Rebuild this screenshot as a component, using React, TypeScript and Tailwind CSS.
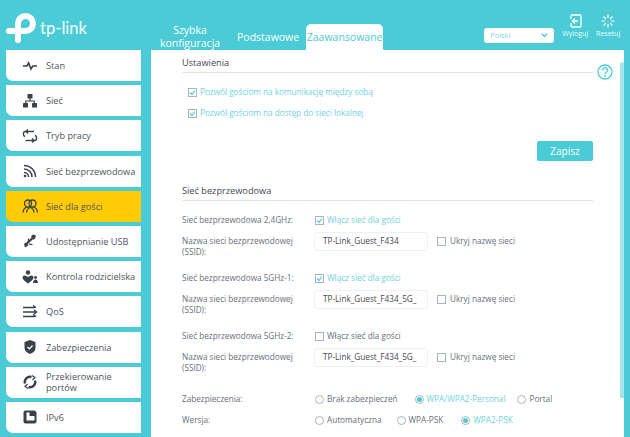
import type { ReactNode } from "react";

const dark = "#39424a";

const icons: Record<string, ReactNode> = {
  stan: <path d="M1 8h4l1.600-3 2.400 6 1.800-3H15" fill="none" stroke={dark} strokeWidth="1.600" />,
  siec: (
    <g fill={dark}>
      <rect x="5.500" y="1" width="5" height="4.500" rx=".6" />
      <rect x="1" y="10" width="5" height="4.500" rx=".6" />
      <rect x="10" y="10" width="5" height="4.500" rx=".6" />
      <path d="M7.400 5h1.200v2.400h4.200V10h-1.200V8.600H4.400V10H3.200V7.400h4.200z" />
    </g>
  ),
  tryb: (
    <g fill="none" stroke={dark} strokeWidth="1.400">
      <path d="M5 3.500H3.200Q1.500 3.500 1.500 5.200v1.600Q1.500 8 3 8.500" />
      <path d="M6 1.500 4 3.500l2 2" />
      <path d="M4 3.500h8" />
      <path d="M11 12.500h1.800q1.700 0 1.700-1.800V9.200Q14.500 8 13 7.500" />
      <path d="m10 10.500 2 2-2 2" />
      <path d="M3.500 12.500H12" />
    </g>
  ),
  wifi: (
    <g fill="none" stroke={dark} strokeWidth="1.500">
      <path d="M2 2.500c6.500 0 11.500 5 11.500 11.500" />
      <path d="M2 6c4.500 0 8 3.500 8 8" />
      <path d="M2 9.500c2.500 0 4.500 2 4.500 4.500" />
      <circle cx="3" cy="13" r="1.300" fill={dark} stroke="none" />
    </g>
  ),
  goscie: (
    <g fill="none" stroke={dark} strokeWidth="1.300">
      <circle cx="6" cy="5.500" r="3.500" />
      <circle cx="10.500" cy="5.500" r="3.500" />
      <path d="M1 14.500q.5-4.500 4-5.500M15.500 14.500q-.5-4.500-4-5.500M4.500 14.500q.5-4 3.700-5 3.300 1 3.800 5" />
    </g>
  ),
  usb: (
    <g fill={dark}>
      <path d="M3 14.500 2 11l1.500-1.500 3 3z" />
      <path d="M3 11 9.500 4.500l1.500 1.500L4.500 12.500z" />
      <path d="m9 3.500 2-2 3 1-1 3-2 1.500z" />
      <path d="M5.500 9 6 5.500l1.200.2-.5 2.300zM7.500 10.500l3 .5-.2 1.200-3.800-.7z" />
    </g>
  ),
  kontrola: (
    <g fill={dark}>
      <circle cx="6" cy="3.500" r="2.200" />
      <path d="M2.500 6.500q1.500 0 3.500 1.500 2-1.500 3.500-1.500 2 0 2 2.200 0 2-5.500 5.800-5.500-3.800-5.500-5.800 0-2.200 2-2.200z" />
      <circle cx="13.500" cy="8.500" r="1.400" />
      <path d="M11 14q.3-3.500 2.500-3.500T16 14z" />
    </g>
  ),
  qos: (
    <g fill="none" stroke={dark} strokeWidth="1.500">
      <path d="M1 3.500h12M1 8h13M1 12.500h12" />
      <path d="m11 1.500 3 2M12 6l2.500 2-2.500 2M11 10.500l3 2" />
    </g>
  ),
  tarcza: (
    <g>
      <path d="M8 1 13.500 3v5.500Q13.500 13 8 15 2.500 13 2.500 8.500V3z" fill={dark} />
      <path d="m5.500 8 2 1.800 3-3.300" fill="none" stroke="#fff" strokeWidth="1.200" />
    </g>
  ),
  porty: (
    <g fill="none" stroke={dark} strokeWidth="2.400">
      <path d="M3 9.500A5.200 5.200 0 0 1 9.500 3" />
      <path d="M13 6.500A5.200 5.200 0 0 1 6.500 13" />
      <path d="M10 1.500 13 3.500 10.500 6" strokeWidth="1.200" />
      <path d="M6 14.500 3 12.500 5.500 10" strokeWidth="1.200" />
    </g>
  ),
  ipv6: (
    <g>
      <path d="M3.500 1.500h8q3 0 3 3v8q0 2-2 2H3.500q-2 0-2-2v-9q0-2 2-2z" fill={dark} />
      <path d="M4.500 3.500h3v3.500h5v4.500h-8z" fill="#fff" />
    </g>
  ),
};

const menu = [
  { label: "Stan", icon: "stan" },
  { label: "Sieć", icon: "siec" },
  { label: "Tryb pracy", icon: "tryb" },
  { label: "Sieć bezprzewodowa", icon: "wifi" },
  { label: "Sieć dla gości", icon: "goscie", active: true },
  { label: "Udostępnianie USB", icon: "usb" },
  { label: "Kontrola rodzicielska", icon: "kontrola" },
  { label: "QoS", icon: "qos" },
  { label: "Zabezpieczenia", icon: "tarcza" },
  { label: "Przekierowanie portów", icon: "porty" },
  { label: "IPv6", icon: "ipv6" },
];

function Check({ on }: { on?: boolean }) {
  return (
    <span className="flex h-[9px] w-[9px] shrink-0 items-center justify-center border border-[#aab4b8] bg-white">
      {on && (
        <svg width="7" height="7" viewBox="0 0 7 7">
          <path d="M1 3.500 3 5.500 6 1.500" fill="none" stroke="#4acbd6" strokeWidth="1.200" />
        </svg>
      )}
    </span>
  );
}

function Radio({ on, label }: { on?: boolean; label: string }) {
  return (
    <span className={`flex items-center gap-[3px] ${on ? "text-[#6fd3dc]" : "text-[#66707a]"}`}>
      <span className="flex h-[9px] w-[9px] items-center justify-center rounded-full border border-[#aab4b8]">
        {on && <span className="h-[5px] w-[5px] rounded-full bg-[#4acbd6]" />}
      </span>
      {label}
    </span>
  );
}

function SectionTitle({ children }: { children: ReactNode }) {
  return (
    <div className="flex h-[23px] items-center border-b border-[#e3e6e8] pt-[3px] text-[9.200px] text-[#3f4950]">
      {children}
    </div>
  );
}

function Band({ name, enabled, ssid }: { name: string; enabled?: boolean; ssid: string }) {
  return (
    <div className="flex h-[58px] flex-col">
      <div className="flex h-[13px] items-center">
        <span className="w-[133px]">{name}</span>
        <span className={`flex items-center gap-[3px] ${enabled ? "text-[#6fd3dc]" : ""}`}>
          <Check on={enabled} />
          Włącz sieć dla gości
        </span>
      </div>
      <div className="mt-[5px] flex">
        <span className="w-[132px] pt-[3px] leading-[11px]">
          Nazwa sieci bezprzewodowej
          <br />
          (SSID):
        </span>
        <span className="flex h-[19px] w-[114px] items-center overflow-hidden rounded-[3px] border border-[#eef0f1] pl-[8px] whitespace-nowrap text-[#3f4950]">
          {ssid}
        </span>
        <span className="ml-[9px] flex h-[19px] items-center gap-[4px]">
          <Check />
          Ukryj nazwę sieci
        </span>
      </div>
    </div>
  );
}

export default function App() {
  return (
    <div className="h-[437px] w-[630px] overflow-hidden bg-[#4acbd6] font-['Open_Sans',sans-serif]">
      {/* header */}
      <header className="flex h-[50px] items-end">
        <div className="flex h-full w-[159px] items-start pt-[11px] pl-[6px]">
          <svg width="31" height="33" viewBox="0 0 31 33">
            <path
              d="M3 20H19.500A7.500 7.500 0 1 0 12 12.500V29"
              fill="none"
              stroke="#fff"
              strokeWidth="6"
              strokeLinecap="round"
            />
          </svg>
          <span className="mt-[5px] ml-[3px] font-['Lato',sans-serif] text-[16.500px] leading-[24px] font-medium text-[#eafcfd]">
            tp-link
          </span>
        </div>
        <nav className="flex items-end text-[10.500px] text-white">
          <span className="w-[62px] text-center leading-[13px]">
            Szybka
            <br />
            konfiguracja
          </span>
          <span className="mb-[6px] ml-[16px] leading-[13px]">Podstawowe</span>
          <span className="ml-[7px] flex h-[26px] w-[77px] items-end justify-center rounded-t-[5px] bg-white pb-[6px] leading-[13px] whitespace-nowrap text-[#4acbd6]">
            Zaawansowane
          </span>
        </nav>
        <div className="mb-[7px] ml-[101px] flex h-[15px] w-[70px] items-center justify-between rounded-[3px] bg-white px-[6px] text-[7.500px] text-[#7fd8df]">
          Polski
          <svg width="7" height="5" viewBox="0 0 7 5">
            <path d="M.8.8 3.500 3.500 6.200.8" fill="none" stroke="#4acbd6" strokeWidth="1.400" />
          </svg>
        </div>
        <div className="ml-[8px] flex h-full w-[26px] flex-col items-center pt-[14px] text-[7px] leading-[9px] text-[#eafcfd]">
          <svg width="13" height="14" viewBox="0 0 13 14">
            <path d="M3 1h8q1 0 1 1v10q0 1-1 1H3q-1 0-1-1V9M2 5V2q0-1 1-1" fill="none" stroke="#fff" strokeWidth="1.300" />
            <path d="M9 7H3.500M6 4.500 3.500 7 6 9.500" fill="none" stroke="#fff" strokeWidth="1.300" />
          </svg>
          <span className="mt-[1px]">Wyloguj</span>
        </div>
        <div className="ml-[7px] flex h-full w-[26px] flex-col items-center pt-[14px] text-[7px] leading-[9px] text-[#eafcfd]">
          <svg width="14" height="14" viewBox="0 0 14 14">
            <path
              d="M7 .5V4M7 10v3.500M.5 7H4M10 7h3.500M2.500 2.500 5 5M9 9l2.500 2.500M11.500 2.500 9 5M5 9l-2.500 2.500"
              fill="none"
              stroke="#fff"
              strokeWidth="1.200"
            />
          </svg>
          <span className="mt-[1px]">Resetuj</span>
        </div>
      </header>
      <main className="flex h-[387px]">
        <aside className="ml-[6px] flex w-[135px] flex-col gap-[4.2px]">
          {menu.map((m) => (
            <div
              key={m.label}
              className={`flex h-[31px] shrink-0 items-center rounded-bl-[7px] pl-[16px] text-[9.200px] leading-[11px] text-[#4d565d] ${
                m.active ? "bg-[#ffcb05]" : "bg-white"
              }`}
            >
              <svg width="16" height="16" viewBox="0 0 16 16" className="mr-[8px] shrink-0">
                {icons[m.icon]}
              </svg>
              <span className="w-[92px]">{m.label}</span>
            </div>
          ))}
        </aside>
        <section className="relative ml-[10px] h-full w-[473px] bg-white px-[31px] text-[8.200px] text-[#66707a]">
          <SectionTitle>Ustawienia</SectionTitle>
          <div className="mt-[13px] flex h-[13px] items-center gap-[3px] pl-[6px] text-[#6fd3dc]">
            <Check on />
            Pozwól gościom na komunikację między sobą
          </div>
          <div className="mt-[8px] flex h-[13px] items-center gap-[3px] pl-[6px] text-[#6fd3dc]">
            <Check on />
            Pozwól gościom na dostęp do sieci lokalnej
          </div>
          <div className="mt-[21px] flex justify-end">
            <span className="flex h-[20px] w-[56px] items-center justify-center rounded-[2px] bg-[#4acbd6] text-[10px] text-white">
              Zapisz
            </span>
          </div>
          <div className="mt-[17px]">
            <SectionTitle>Sieć bezprzewodowa</SectionTitle>
          </div>
          <div className="mt-[13px] flex flex-col">
            <Band name="Sieć bezprzewodowa 2,4GHz:" enabled ssid="TP-Link_Guest_F434" />
            <Band name="Sieć bezprzewodowa 5GHz-1:" enabled ssid="TP-Link_Guest_F434_5G_" />
            <Band name="Sieć bezprzewodowa 5GHz-2:" ssid="TP-Link_Guest_F434_5G_" />
          </div>
          <div className="mt-[5px] flex h-[13px] items-center">
            <span className="w-[133px]">Zabezpieczenia:</span>
            <span className="flex">
              <Radio label="Brak zabezpieczeń" />
              <span className="w-[17px]" />
              <Radio on label="WPA/WPA2-Personal" />
              <span className="w-[12px]" />
              <Radio label="Portal" />
            </span>
          </div>
          <div className="mt-[8px] flex h-[13px] items-center">
            <span className="w-[133px]">Wersja:</span>
            <span className="flex">
              <Radio label="Automatyczna" />
              <span className="w-[15px]" />
              <Radio label="WPA-PSK" />
              <span className="w-[18px]" />
              <Radio on label="WPA2-PSK" />
            </span>
          </div>
          {/* help + scrollbar float over the panel */}
          <svg width="16" height="16" viewBox="0 0 16 16" className="absolute top-[14px] left-[446px]">
            <circle cx="8" cy="8" r="7" fill="none" stroke="#4acbd6" strokeWidth="1.300" />
            <path d="M5.500 6.200a2.500 2.500 0 1 1 3.800 2.100Q8 9 8 10.300" fill="none" stroke="#4acbd6" strokeWidth="1.300" />
            <circle cx="8" cy="12" r=".9" fill="#4acbd6" />
          </svg>
          <div className="absolute top-[12px] right-0 h-[336px] w-[4px] rounded-t-[2px] bg-[#a5e5ea]" />
        </section>
      </main>
    </div>
  );
}
